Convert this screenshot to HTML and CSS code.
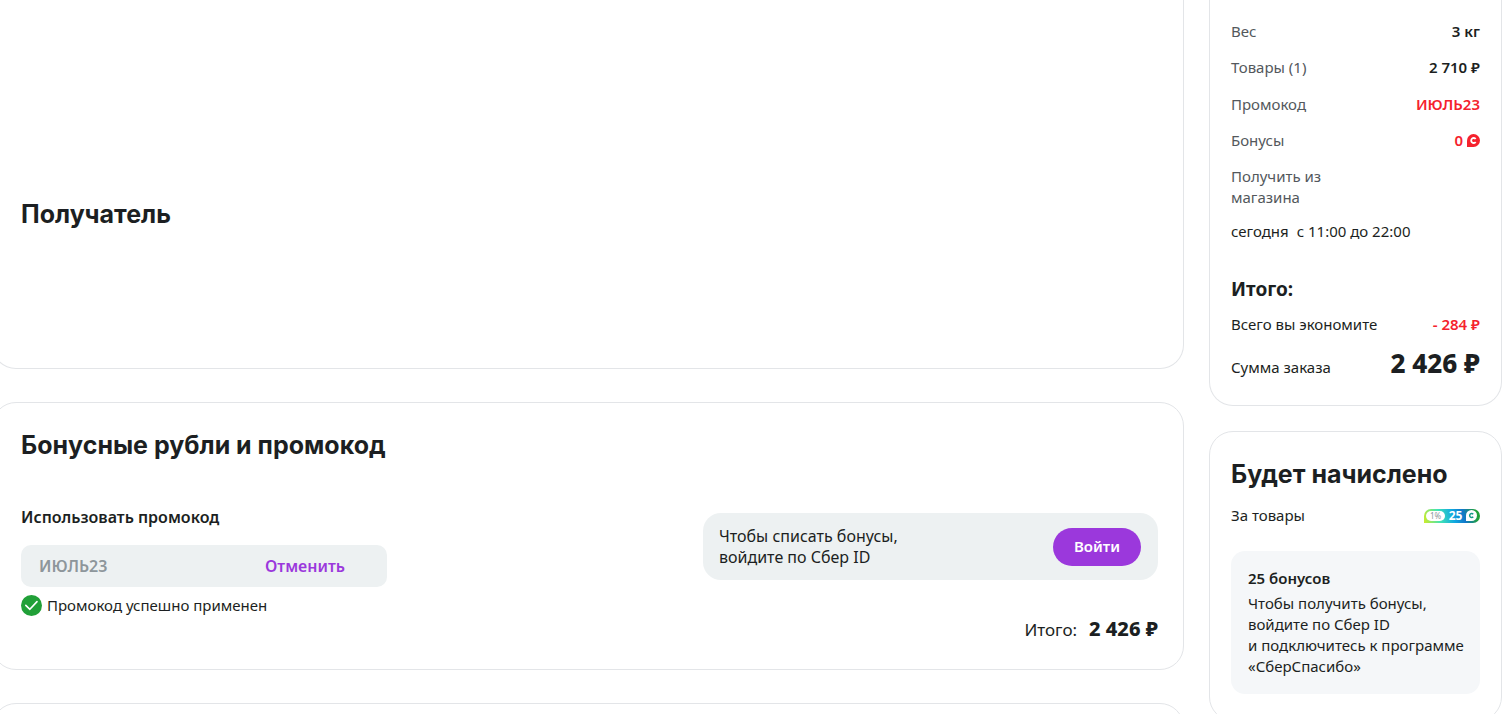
FILE: index.html
```html
<!DOCTYPE html>
<html lang="ru">
<head>
<meta charset="utf-8">
<title>Оформление заказа</title>
<link rel="stylesheet" href="styles.css">
</head>
<body>
<div class="page">
  <main class="main">
    <section class="card recipient">
      <h2 class="title">Получатель</h2>
    </section>
    <section class="card bonuses">
      <h2 class="title">Бонусные рубли и промокод</h2>
      <div class="bonuses-body">
        <form class="promo">
          <label class="promo-label" for="promo">Использовать промокод</label>
          <div class="promo-field">
            <input class="promo-input" id="promo" type="text" value="ИЮЛЬ23" readonly>
            <button class="promo-cancel" type="button">Отменить</button>
          </div>
          <p class="promo-status">
            <svg class="check" viewBox="0 0 21 21" aria-hidden="true"><circle cx="10.500" cy="10.500" r="10.500" fill="#21a038"/><path d="M4.800 10.400 8.900 14.300 16 6.600" fill="none" stroke="#fff" stroke-width="1.600" stroke-linecap="round" stroke-linejoin="round"/></svg>
            <span>Промокод успешно применен</span>
          </p>
        </form>
        <div class="login">
          <p class="login-text">Чтобы списать бонусы,<br>войдите по Сбер ID</p>
          <button class="login-button" type="button">Войти</button>
        </div>
      </div>
      <p class="subtotal"><span>Итого:</span><strong class="subtotal-value">2 426 ₽</strong></p>
    </section>
    <section class="card next"></section>
  </main>
  <aside class="side">
    <section class="card summary">
      <dl class="rows">
        <div class="row"><dt>Вес</dt><dd>3 кг</dd></div>
        <div class="row"><dt>Товары (1)</dt><dd>2 710 ₽</dd></div>
        <div class="row row-promo"><dt>Промокод</dt><dd class="red">ИЮЛЬ23</dd></div>
        <div class="row"><dt>Бонусы</dt><dd class="red coin">0 <svg class="coin-icon" viewBox="0 0 13 13" aria-hidden="true"><path d="M0 13V6.500A6.500 6.500 0 1 1 6.500 13Z" fill="#f5222d"/><path d="M8.700 5A2.500 2.500 0 1 0 8.700 8" fill="none" stroke="#fff" stroke-width="1.800"/></svg></dd></div>
        <div class="row"><dt>Получить из<br>магазина</dt></div>
      </dl>
      <p class="pickup"><span>сегодня</span><span>с 11:00 до 22:00</span></p>
      <h3 class="total-title">Итого:</h3>
      <div class="row dark"><span>Всего вы экономите</span><strong class="red">- 284 ₽</strong></div>
      <div class="row dark order-sum"><span>Сумма заказа</span><strong class="big">2 426 ₽</strong></div>
    </section>
    <section class="card accrual">
      <h2 class="title">Будет начислено</h2>
      <div class="row dark goods">
        <span>За товары</span>
        <span class="badge"><span class="badge-rate">1%</span><span class="badge-sum">25</span><svg class="badge-icon" viewBox="0 0 11 11" aria-hidden="true"><path d="M0 11V5.500A5.500 5.500 0 1 1 5.500 11Z" fill="#fff"/><path d="M7.200 4.200A2 2 0 1 0 7.200 6.800" fill="none" stroke="#159a86" stroke-width="1.500"/></svg></span>
      </div>
      <div class="note">
        <h3 class="note-title">25 бонусов</h3>
        <p class="note-text">Чтобы получить бонусы,<br>войдите по Сбер ID<br>и подключитесь к программе<br>«СберСпасибо»</p>
      </div>
    </section>
  </aside>
</div>
</body>
</html>
```
FILE: styles.css
```css
* { box-sizing: border-box; }
body {
  margin: 0;
  height: 100vh;
  overflow: hidden;
  background: #fff;
  color: #1c1f22;
  font: 15px/21px "Noto Sans", "Open Sans", sans-serif;
}
h2, h3, p, dl, dd { margin: 0; }
button, input { border: 0; padding: 0; font: inherit; }
button { cursor: pointer; }

.page {
  display: grid;
  grid-template-columns: minmax(0, 1fr) 293px;
  gap: 25px;
  height: 100%;
  margin: 0 8px 0 -8px;
  overflow: hidden;
}
.main { display: flex; flex-direction: column; gap: 33px; }
.side { display: flex; flex-direction: column; gap: 25px; }
.card { border: 1px solid #e3e5e8; border-radius: 24px; }
.title { font: 700 25px/34px Inter, "Noto Sans", sans-serif; }

.recipient {
  padding: 197px 28px 137px;
  border-top: 0;
  border-radius: 0 0 24px 24px;
}
.bonuses { padding: 25px 25px 27px 28px; }
.bonuses-body {
  display: flex;
  justify-content: space-between;
  align-items: flex-start;
  margin-top: 45px;
}
.promo-label { display: block; font-size: 16px; font-weight: 600; }
.promo { width: 366px; }
.promo-field {
  display: flex;
  align-items: center;
  justify-content: space-between;
  height: 42px;
  margin-top: 17px;
  padding: 0 42px 0 18px;
  border-radius: 10px;
  background: #edf1f2;
  font-size: 16px;
  font-weight: 600;
}
.promo-input { width: 160px; background: none; color: #8d969b; outline: none; }
.promo-cancel { background: none; color: #9b38dc; }
.promo-status { display: flex; align-items: center; gap: 5px; margin-top: 8px; }
.check { width: 21px; height: 21px; }
.login {
  display: flex;
  justify-content: space-between;
  align-items: center;
  width: 455px;
  height: 67px;
  margin-top: 6px;
  padding: 0 17px 0 16px;
  border-radius: 18px;
  background: #edf1f2;
}
.login-text { font-size: 16px; }
.login-button {
  width: 88px;
  height: 38px;
  border-radius: 19px;
  background: #9b38dc;
  color: #fff;
  font-weight: 600;
}
.subtotal {
  display: flex;
  justify-content: flex-end;
  align-items: baseline;
  gap: 12px;
  margin-top: 1px;
  font-size: 17px;
  line-height: 24px;
}
.subtotal-value { font-size: 20px; font-weight: 800; }
.next { flex: none; height: 60px; }

.summary {
  padding: 21px 21px 24px;
  border-top: 0;
  border-radius: 0 0 24px 24px;
}
.rows { display: flex; flex-direction: column; gap: 15px; color: #53585c; }
.row { display: flex; justify-content: space-between; align-items: baseline; }
.row dd { color: #1c1f22; font-weight: 600; }
.row-promo { padding-top: 1px; }
.row .red { color: #f5222d; font-weight: 600; }
.dark { color: #1c1f22; }
.coin { display: flex; align-items: center; gap: 4px; }
.coin-icon { width: 13px; height: 13px; }
.pickup { display: flex; gap: 8px; margin-top: 13px; }
.total-title { margin: 34px 0 12px; font: 700 19px/26px "Noto Sans", sans-serif; }
.order-sum { margin-top: 10px; }
.big { font-size: 26px; font-weight: 800; line-height: 36px; }

.accrual { flex: none; padding: 25px 21px 26px; }
.goods { align-items: center; margin-top: 14px; }
.badge {
  display: flex;
  align-items: center;
  justify-content: space-between;
  width: 56px;
  height: 14px;
  padding: 0 3px 0 2px;
  border-radius: 7px 7px 7px 0;
  background: linear-gradient(75deg, #d0ec27 0%, #42e3b4 28%, #0fa8e0 52%, #1277c9 70%, #21a038 92%);
  line-height: 14px;
}
.badge-rate {
  width: 19px;
  border-radius: 5px;
  background: #fff;
  color: #8d969b;
  font-size: 8px;
  line-height: 10px;
  text-align: center;
}
.badge-sum { color: #fff; font-size: 12px; font-weight: 700; }
.badge-icon { width: 11px; height: 11px; }
.note { margin-top: 25px; padding: 17px; border-radius: 14px; background: #f5f7f9; }
.note-title { margin-bottom: 4px; font-size: 15px; font-weight: 600; line-height: 21px; }
.note-text { white-space: nowrap; }
```
